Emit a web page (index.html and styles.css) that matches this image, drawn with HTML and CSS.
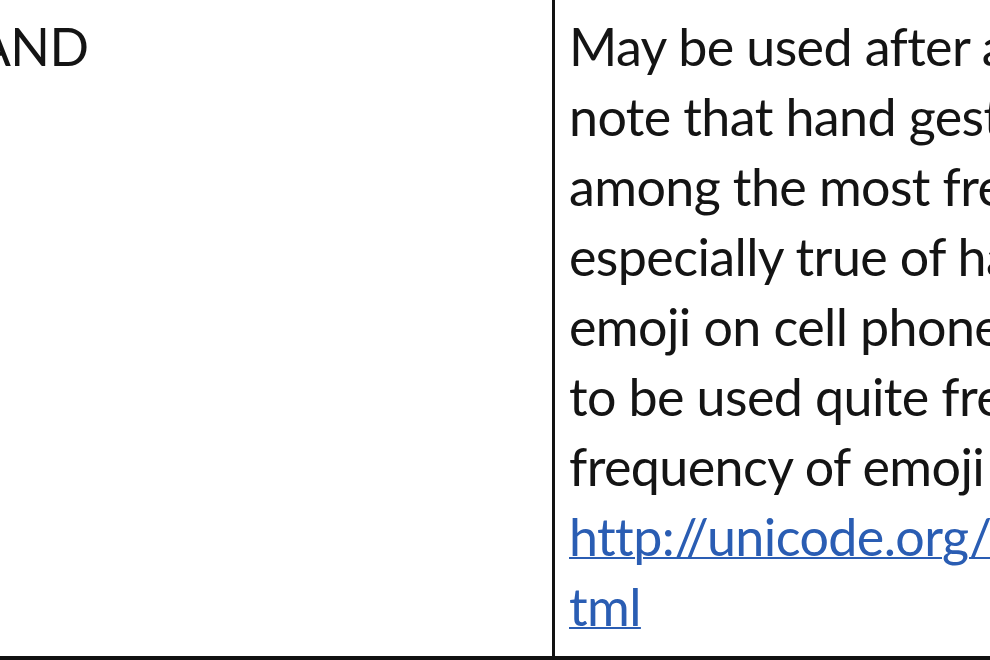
FILE: index.html
```html
<!DOCTYPE html>
<html lang="en">
<head>
    <meta charset="UTF-8">
    <title>Emoji notes</title>
    <link rel="stylesheet" href="styles.css">
</head>
<body>
    <div class="table">
        <div class="row">
            <div class="cell name">WAVING HAND</div>
            <div class="cell notes">
                <span class="line">May be used after a name to indicate greeting. Please</span>
                <span class="line">note that hand gestures are culturally specific and</span>
                <span class="line">among the most frequently misunderstood. This is</span>
                <span class="line">especially true of hand gestures used as</span>
                <span class="line">emoji on cell phones, which tend</span>
                <span class="line">to be used quite frequently. For data on the</span>
                <span class="line">frequency of emoji usage, see</span>
                <span class="line"><a href="#">http://unicode.org/emoji/charts/emoji-frequency.h</a></span>
                <span class="line"><a href="#">tml</a></span>
            </div>
        </div>
    </div>
</body>
</html>
```

FILE: styles.css
```css
body {
    margin: 0;
    padding: 0;
    background-color: #fff;
    overflow: hidden;
    width: 990px;
    height: 660px;
}

.table {
    font-family: Lato, "Open Sans", sans-serif;
    font-size: 52px;
    letter-spacing: -0.6px;
    line-height: 70px;
    color: #141414;
    margin-left: -298px;
    border-bottom: 4px solid #111;
    width: 2200px;
}

.row {
    display: flex;
}

.cell {
    box-sizing: border-box;
    padding: 11px 14px 15px 14px;
}

.name {
    flex: 0 0 853px;
    border-right: 3px solid #111;
}

.notes {
    flex: 1 0 auto;
    white-space: nowrap;
}

.line {
    display: block;
}

a {
    color: #2a5db3;
    text-decoration: underline;
    text-decoration-thickness: 2px;
}
```
